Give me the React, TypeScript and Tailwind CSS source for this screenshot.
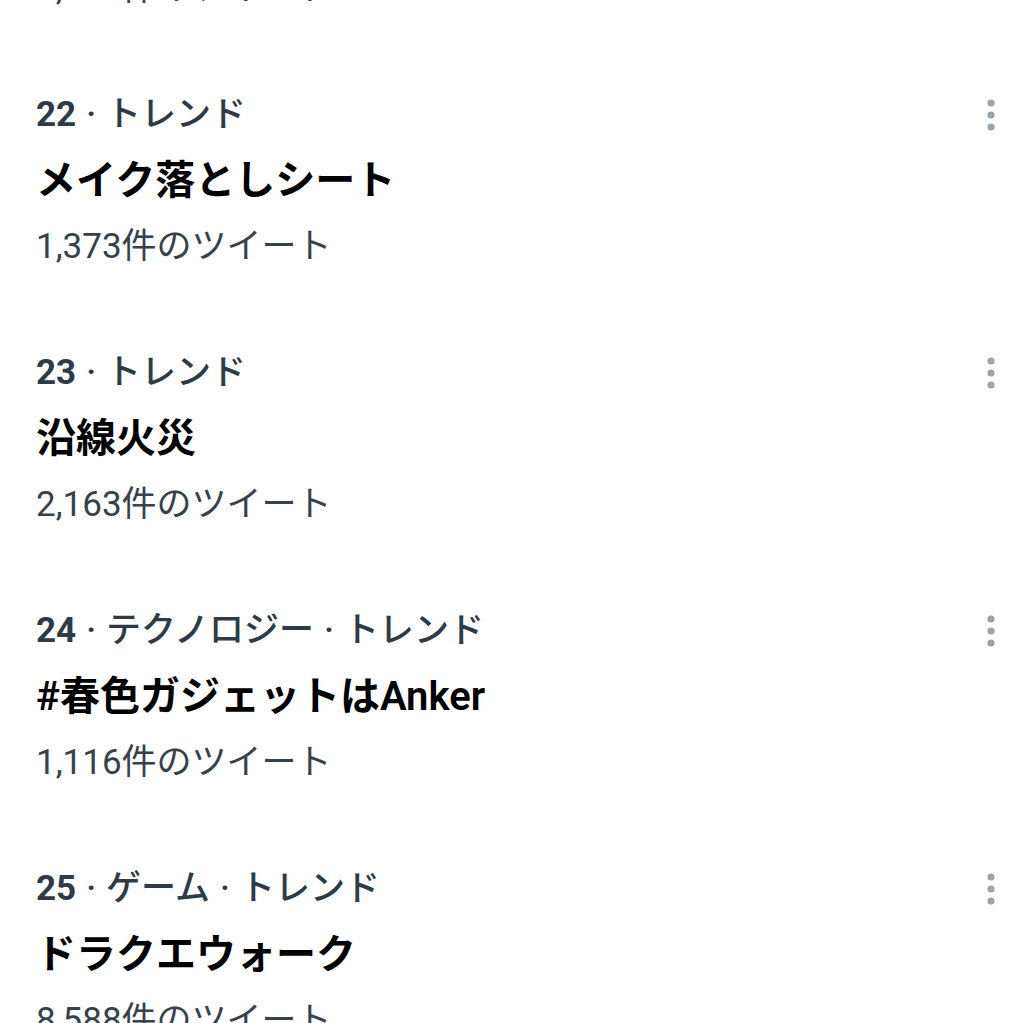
import { useState } from "react";

type Trend = {
  rank: number;
  category: string;
  title: string;
  count: string;
};

const trends: Trend[] = [
  { rank: 21, category: "トレンド", title: "春休み", count: "1,523" },
  { rank: 22, category: "トレンド", title: "メイク落としシート", count: "1,373" },
  { rank: 23, category: "トレンド", title: "沿線火災", count: "2,163" },
  { rank: 24, category: "テクノロジー・トレンド", title: "#春色ガジェットはAnker", count: "1,116" },
  { rank: 25, category: "ゲーム・トレンド", title: "ドラクエウォーク", count: "8,588" },
];

const MoreIcon = () => (
  <svg width="10" height="34" viewBox="0 0 10 34" className="block">
    <circle cx="5" cy="5" r="3.6" fill="#9aa4ad" />
    <circle cx="5" cy="17" r="3.6" fill="#9aa4ad" />
    <circle cx="5" cy="29" r="3.6" fill="#9aa4ad" />
  </svg>
);

const TrendRow = ({ trend }: { trend: Trend }) => {
  const parts = trend.category.split("・");
  return (
    <div className="flex justify-between py-[30px] pl-[36px] pr-[28px]">
      <div className="flex flex-col">
        <div className="h-[66px] flex items-center text-[35px] text-[#2e3a45] whitespace-nowrap">
          <span className="font-bold">{trend.rank}</span>
          {parts.map((p, i) => (
            <span key={i} className="font-medium">
              <span className="mx-[10px]">·</span>
              {p}
            </span>
          ))}
        </div>
        <div className="h-[66px] flex items-center text-[40px] font-semibold text-black whitespace-nowrap">
          {trend.title}
        </div>
        <div className="h-[66px] flex items-center text-[35px] text-[#36414b] whitespace-nowrap">
          {trend.count}件のツイート
        </div>
      </div>
      <div className="pt-[16px]">
        <MoreIcon />
      </div>
    </div>
  );
};

const App = () => {
  const [items] = useState(trends);
  return (
    <div
      className="w-[1024px] h-[1023px] overflow-hidden bg-white"
      style={{ fontFamily: '"Roboto", "Noto Sans CJK JP", sans-serif' }}
    >
      <div className="mt-[-206px]">
        {items.map((t) => (
          <TrendRow key={t.rank} trend={t} />
        ))}
      </div>
    </div>
  );
};

export default App;
